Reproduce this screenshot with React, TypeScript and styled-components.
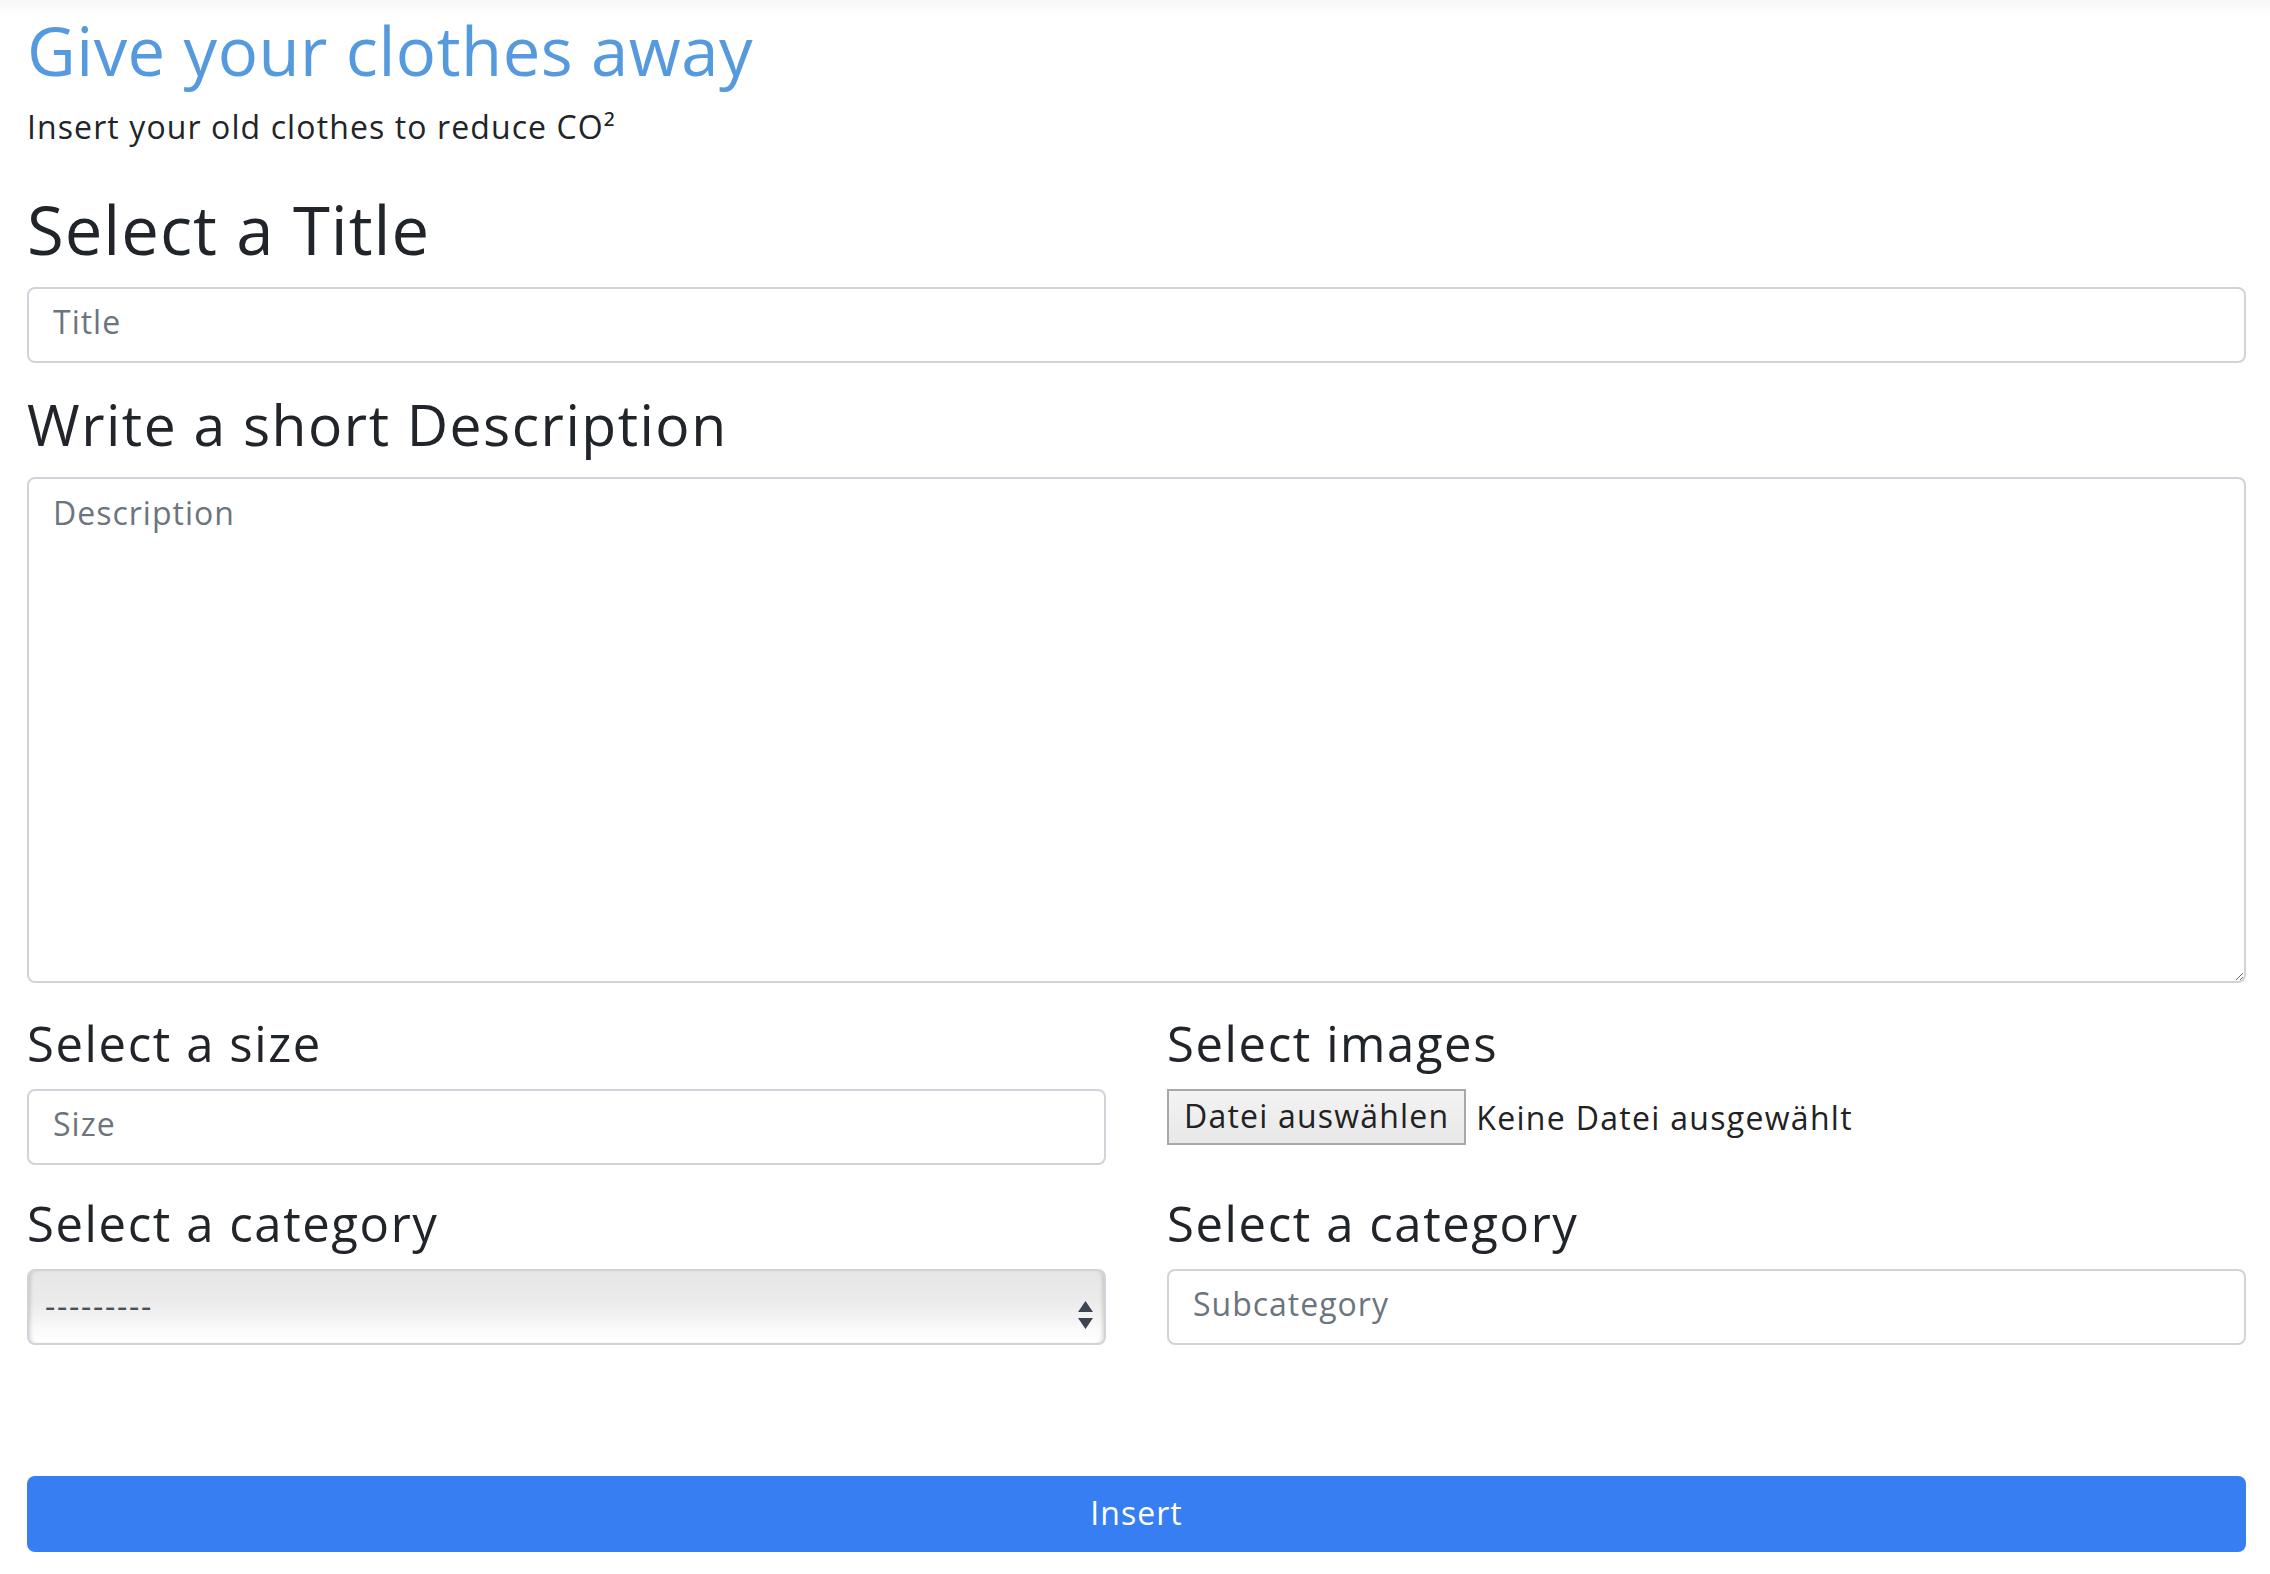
import React from "react";
import styled, { createGlobalStyle } from "styled-components";

const GlobalStyle = createGlobalStyle`
  html, body {
    margin: 0;
    padding: 0;
    background: #fff;
  }
  body {
    font-family: "Open Sans", "Liberation Sans", sans-serif;
    color: #212529;
  }
  * { box-sizing: border-box; }
`

const Shade = styled.div`
  height: 0;
  box-shadow: 0 0 14px 6px rgba(0,0,0,0.05);
`

const Page = styled.main`
  padding: 0 24px 0 27px;
  display: flex;
  flex-direction: column;
`

const PageTitle = styled.h1`
  margin: 10px 0 0;
  font-size: 67px;
  line-height: 80px;
  font-weight: 400;
  letter-spacing: 0.5px;
  color: #559ade;
`

const Lead = styled.p`
  margin: 13px 0 0;
  font-size: 32px;
  line-height: 48px;
  letter-spacing: 1.1px;
  color: #212529;
`

const Heading = styled.h2<{ $size: "lg" | "md" | "sm", $gap: number }>`
  margin: ${p => p.$gap}px 0 0;
  font-weight: 400;
  color: #212529;
  font-size: ${p => p.$size === "lg" ? 67 : p.$size === "md" ? 57 : 49}px;
  line-height: ${p => p.$size === "lg" ? 80 : p.$size === "md" ? 68 : 60}px;
  letter-spacing: ${p => p.$size === "lg" ? 1 : p.$size === "md" ? 1.5 : 1.6}px;
`

const TextInput = styled.input<{ $gap?: number }>`
  display: block;
  width: 100%;
  height: 76px;
  margin-top: ${p => p.$gap ?? 0}px;
  padding: 0 24px 8px;
  border: 2px solid #ced4da;
  border-radius: 8px;
  background: #fff;
  font-family: inherit;
  font-size: 32px;
  letter-spacing: 1px;
  color: #495057;
  outline: none;
  &::placeholder { color: #6c757d; }
`

const TextArea = styled.textarea`
  display: block;
  width: 100%;
  height: 506px;
  margin-top: 19px;
  padding: 10px 24px;
  border: 2px solid #ced4da;
  border-radius: 8px;
  font-family: inherit;
  font-size: 32px;
  line-height: 48px;
  letter-spacing: 1px;
  color: #495057;
  outline: none;
  resize: vertical;
  &::placeholder { color: #6c757d; }
`

const FieldGrid = styled.div`
  margin-top: 30px;
  display: grid;
  grid-template-columns: 1fr 1fr;
  column-gap: 61px;
  row-gap: 28px;
`

const Field = styled.div`
  display: flex;
  flex-direction: column;
  gap: 16px;
`

const Control = styled.div`
  position: relative;
  height: 76px;
`

const Select = styled.select`
  display: block;
  width: 100%;
  height: 76px;
  padding: 0 60px 4px 16px;
  appearance: none;
  border: 2px solid #ced4da;
  border-radius: 8px;
  background: linear-gradient(#e6e6e6 0%, #ececec 45%, #fbfbfb 85%, #fff 100%);
  box-shadow: inset 4px 0 4px -3px rgba(0,0,0,0.18), inset -4px 0 4px -3px rgba(0,0,0,0.18);
  font-family: inherit;
  font-size: 32px;
  letter-spacing: 1.7px;
  color: #495057;
  outline: none;
`

const Arrows = styled.svg`
  position: absolute;
  right: 13px;
  top: 32px;
  pointer-events: none;
`

const FileRow = styled.div`
  display: flex;
  align-items: center;
  gap: 10px;
  font-size: 32px;
  letter-spacing: 1.3px;
  color: #222;
`

const FileButton = styled.button`
  height: 56px;
  padding: 0 15px 4px;
  border: 2px solid #a8a8a8;
  background: linear-gradient(#f3f3f3, #e8e8e8);
  font-family: inherit;
  font-size: 32px;
  letter-spacing: 1.2px;
  color: #222;
`

const SubmitButton = styled.button`
  margin-top: 131px;
  height: 76px;
  width: 100%;
  border: none;
  border-radius: 8px;
  background: #377ef3;
  color: #fff;
  font-family: inherit;
  font-size: 32px;
  letter-spacing: 1px;
  padding-bottom: 4px;
`

export default function App() {
  return <>
    <GlobalStyle />
    <Shade />
    <Page>
      <PageTitle>Give your clothes away</PageTitle>
      <Lead>Insert your old clothes to reduce CO²</Lead>

      <Heading $size="lg" $gap={38}>Select a Title</Heading>
      <TextInput $gap={18} placeholder="Title" />

      <Heading $size="md" $gap={27}>Write a short Description</Heading>
      <TextArea placeholder="Description" />

      <FieldGrid>
        <Field>
          <Heading $size="sm" $gap={0}>Select a size</Heading>
          <Control>
            <TextInput placeholder="Size" />
          </Control>
        </Field>
        <Field>
          <Heading $size="sm" $gap={0}>Select images</Heading>
          <Control>
            <FileRow>
              <FileButton type="button">Datei auswählen</FileButton>
              <span>Keine Datei ausgewählt</span>
            </FileRow>
          </Control>
        </Field>
        <Field>
          <Heading $size="sm" $gap={0}>Select a category</Heading>
          <Control>
            <Select defaultValue="">
              <option value="">---------</option>
            </Select>
            <Arrows width="15" height="28" viewBox="0 0 15 28">
              <path d="M7.5 0 L15 11 L0 11 Z" fill="#3d4450" />
              <path d="M0 17 L15 17 L7.5 28 Z" fill="#3d4450" />
            </Arrows>
          </Control>
        </Field>
        <Field>
          <Heading $size="sm" $gap={0}>Select a category</Heading>
          <Control>
            <TextInput placeholder="Subcategory" />
          </Control>
        </Field>
      </FieldGrid>

      <SubmitButton type="submit">Insert</SubmitButton>
    </Page>
  </>
}
